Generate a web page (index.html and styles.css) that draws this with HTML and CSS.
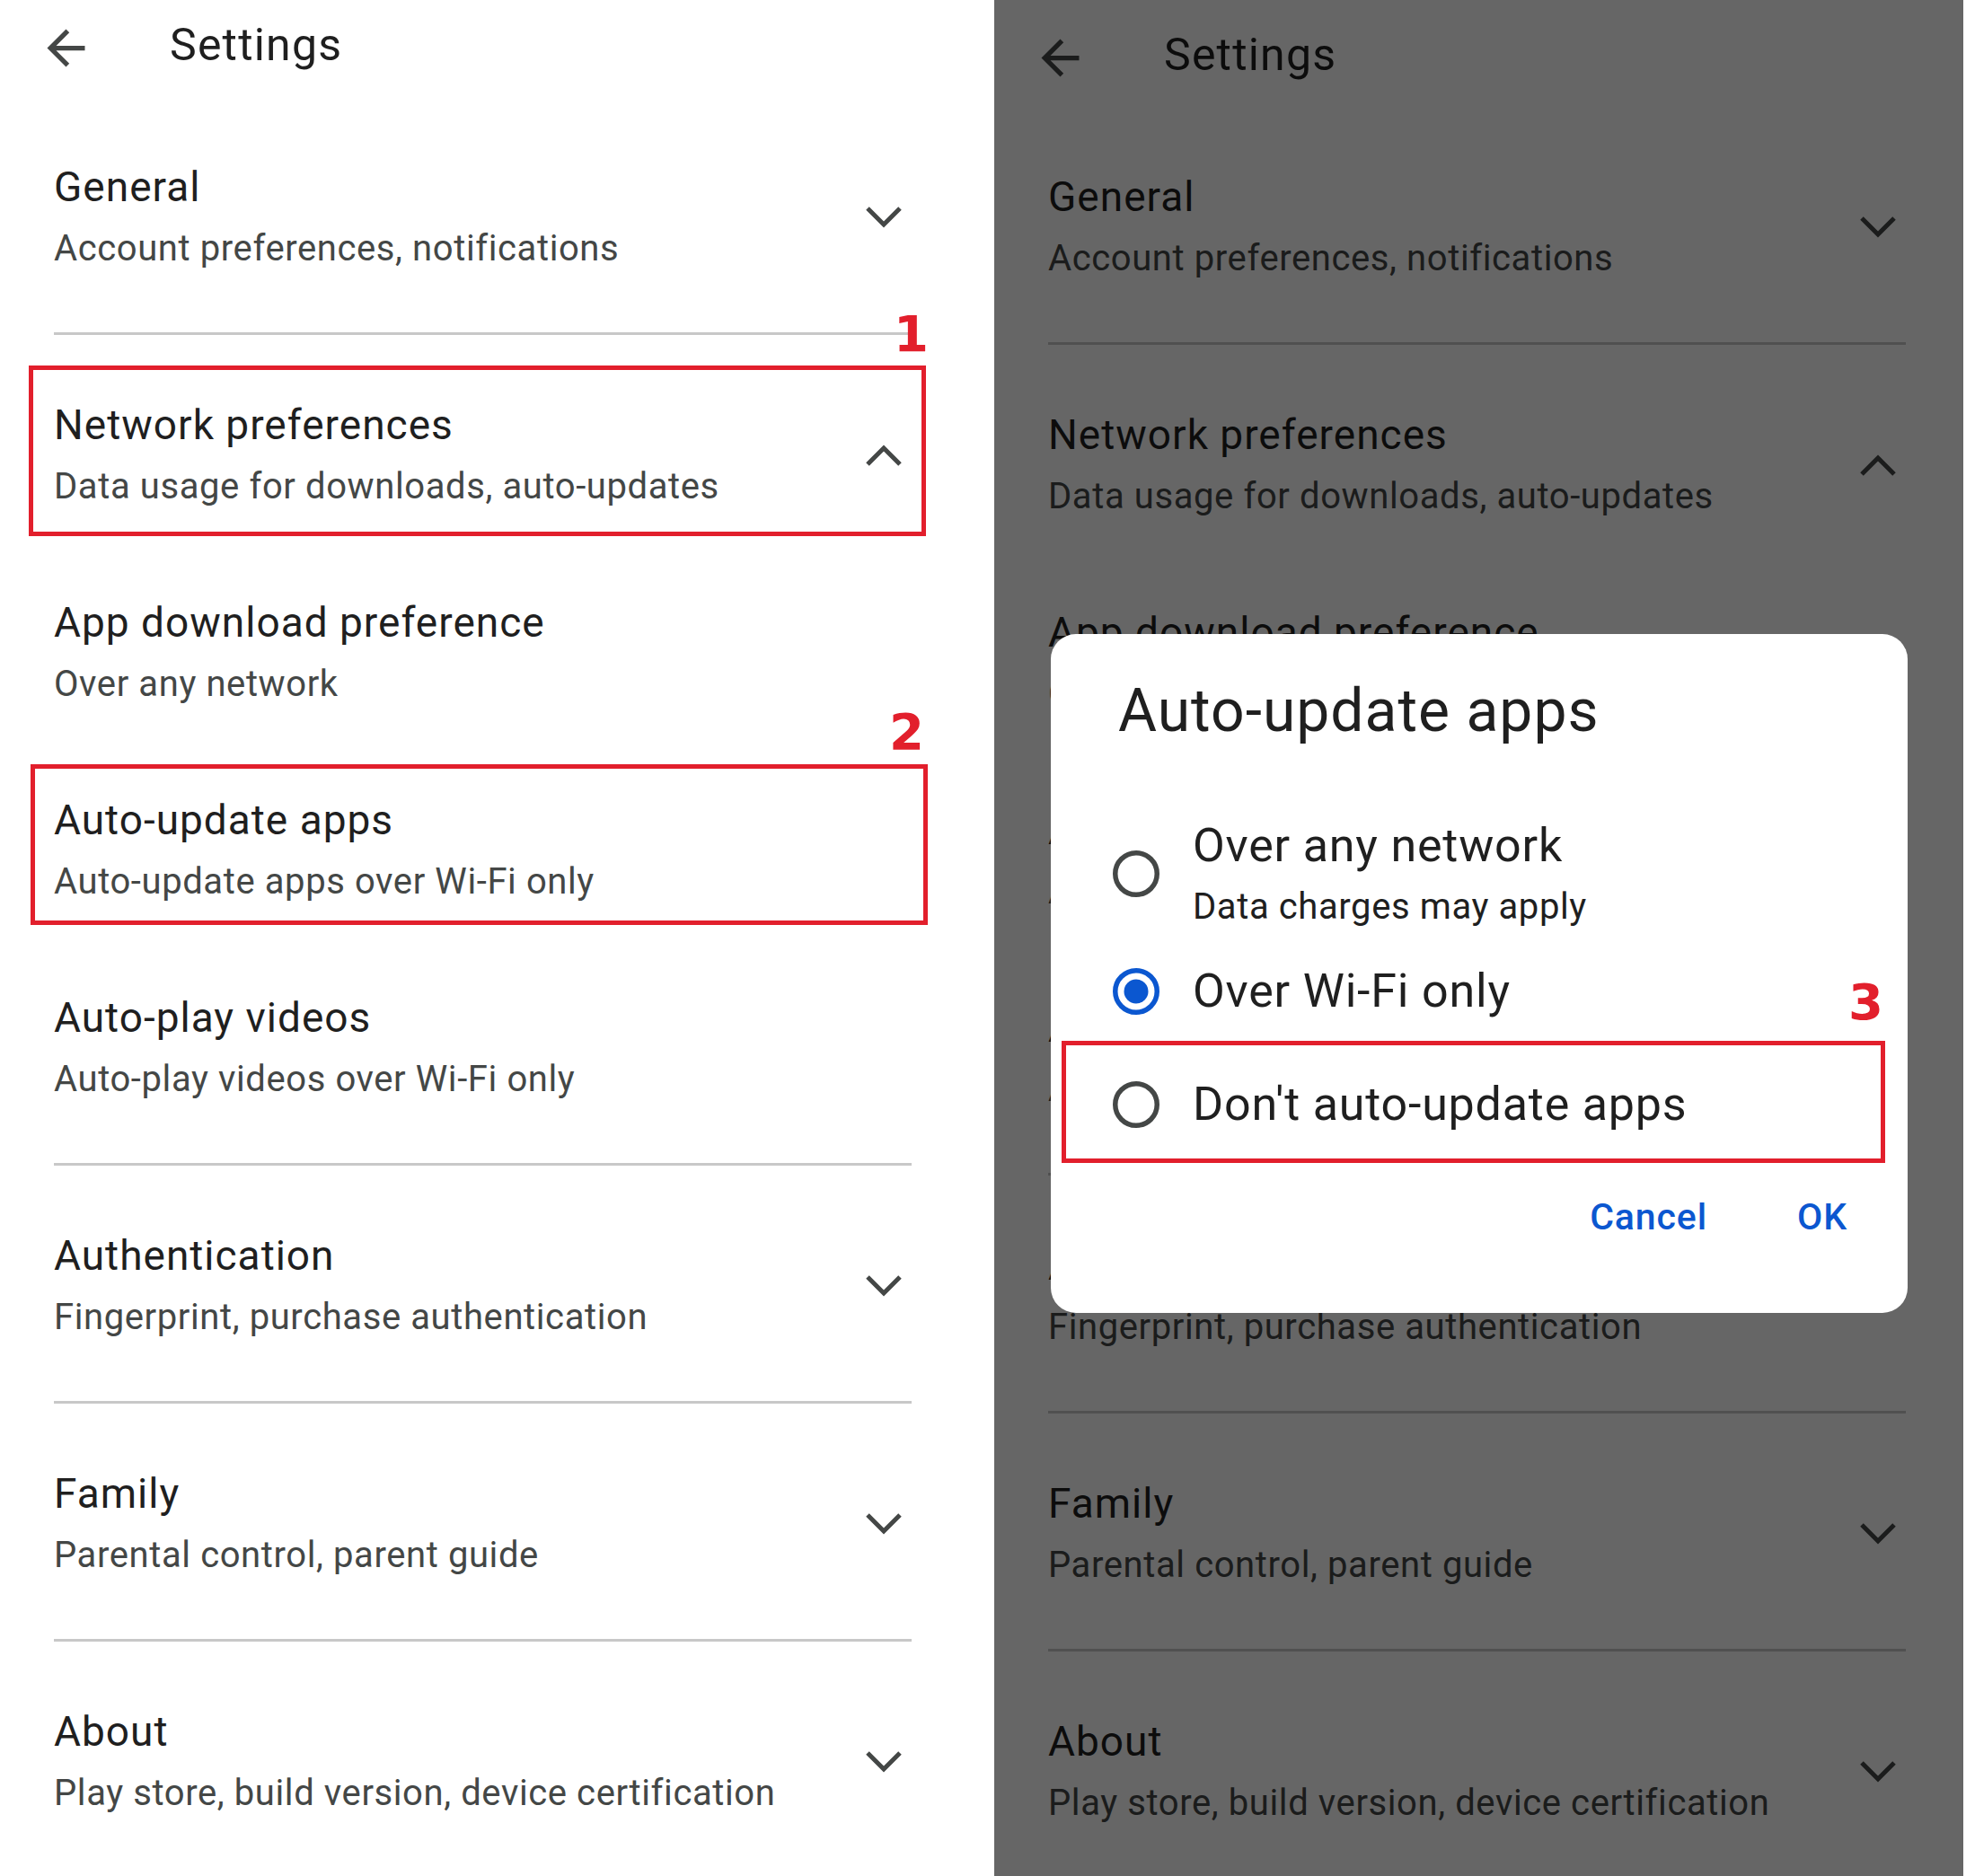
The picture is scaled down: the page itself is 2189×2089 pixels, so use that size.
FILE: index.html
```html
<!DOCTYPE html>
<html lang="en">
<head>
<meta charset="utf-8">
<title>Settings - Auto-update apps</title>
<link rel="stylesheet" href="styles.css">
</head>
<body>
<div class="page">

  <section class="screen screen-light">
    <header class="topbar">
      <svg class="back" viewBox="0 0 24 24"><path d="M20 11H7.83l5.59-5.59L12 4l-8 8 8 8 1.41-1.41L7.83 13H20v-2z"/></svg>
      <h1 class="top-title">Settings</h1>
    </header>
    <div class="list">
      <div class="group">
        <div class="row">
          <div class="text"><div class="t">General</div><div class="s">Account preferences, notifications</div></div>
          <svg class="chev" viewBox="0 0 42 28"><polyline points="3,4 21,22 39,4"/></svg>
        </div>
      </div>
      <div class="group">
        <div class="row mark">
          <div class="text"><div class="t">Network preferences</div><div class="s">Data usage for downloads, auto-updates</div></div>
          <svg class="chev" viewBox="0 0 42 28"><polyline points="3,24 21,6 39,24"/></svg>
          <div class="anno anno-1"><span class="num num-1">1</span></div>
        </div>
        <div class="sub">
          <div class="text"><div class="t">App download preference</div><div class="s">Over any network</div></div>
        </div>
        <div class="sub mark">
          <div class="text"><div class="t">Auto-update apps</div><div class="s">Auto-update apps over Wi-Fi only</div></div>
          <div class="anno anno-2"><span class="num num-2">2</span></div>
        </div>
        <div class="sub">
          <div class="text"><div class="t">Auto-play videos</div><div class="s">Auto-play videos over Wi-Fi only</div></div>
        </div>
      </div>
      <div class="group">
        <div class="row">
          <div class="text"><div class="t">Authentication</div><div class="s">Fingerprint, purchase authentication</div></div>
          <svg class="chev" viewBox="0 0 42 28"><polyline points="3,4 21,22 39,4"/></svg>
        </div>
      </div>
      <div class="group">
        <div class="row">
          <div class="text"><div class="t">Family</div><div class="s">Parental control, parent guide</div></div>
          <svg class="chev" viewBox="0 0 42 28"><polyline points="3,4 21,22 39,4"/></svg>
        </div>
      </div>
      <div class="group">
        <div class="row">
          <div class="text"><div class="t">About</div><div class="s">Play store, build version, device certification</div></div>
          <svg class="chev" viewBox="0 0 42 28"><polyline points="3,4 21,22 39,4"/></svg>
        </div>
      </div>
    </div>
  </section>

  <section class="screen screen-dim">
    <header class="topbar">
      <svg class="back" viewBox="0 0 24 24"><path d="M20 11H7.83l5.59-5.59L12 4l-8 8 8 8 1.41-1.41L7.83 13H20v-2z"/></svg>
      <h1 class="top-title">Settings</h1>
    </header>
    <div class="list">
      <div class="group">
        <div class="row">
          <div class="text"><div class="t">General</div><div class="s">Account preferences, notifications</div></div>
          <svg class="chev" viewBox="0 0 42 28"><polyline points="3,4 21,22 39,4"/></svg>
        </div>
      </div>
      <div class="group">
        <div class="row">
          <div class="text"><div class="t">Network preferences</div><div class="s">Data usage for downloads, auto-updates</div></div>
          <svg class="chev" viewBox="0 0 42 28"><polyline points="3,24 21,6 39,24"/></svg>
        </div>
        <div class="sub">
          <div class="text"><div class="t">App download preference</div><div class="s">Over any network</div></div>
        </div>
        <div class="sub">
          <div class="text"><div class="t">Auto-update apps</div><div class="s">Auto-update apps over Wi-Fi only</div></div>
        </div>
        <div class="sub">
          <div class="text"><div class="t">Auto-play videos</div><div class="s">Auto-play videos over Wi-Fi only</div></div>
        </div>
      </div>
      <div class="group">
        <div class="row">
          <div class="text"><div class="t">Authentication</div><div class="s">Fingerprint, purchase authentication</div></div>
          <svg class="chev" viewBox="0 0 42 28"><polyline points="3,4 21,22 39,4"/></svg>
        </div>
      </div>
      <div class="group">
        <div class="row">
          <div class="text"><div class="t">Family</div><div class="s">Parental control, parent guide</div></div>
          <svg class="chev" viewBox="0 0 42 28"><polyline points="3,4 21,22 39,4"/></svg>
        </div>
      </div>
      <div class="group">
        <div class="row">
          <div class="text"><div class="t">About</div><div class="s">Play store, build version, device certification</div></div>
          <svg class="chev" viewBox="0 0 42 28"><polyline points="3,4 21,22 39,4"/></svg>
        </div>
      </div>
    </div>
    <div class="scrim"></div>

    <div class="dialog">
      <h2 class="dlg-title">Auto-update apps</h2>
      <div class="opt opt-1">
        <svg class="radio" viewBox="0 0 52 52"><circle cx="26" cy="26" r="23.25"/></svg>
        <div class="opt-text"><div class="ot">Over any network</div><div class="os">Data charges may apply</div></div>
      </div>
      <div class="opt opt-2">
        <svg class="radio on" viewBox="0 0 52 52"><circle cx="26" cy="26" r="23.25"/><circle class="dot" cx="26" cy="26" r="13.5"/></svg>
        <div class="opt-text"><div class="ot">Over Wi-Fi only</div></div>
      </div>
      <div class="opt opt-3 mark">
        <svg class="radio" viewBox="0 0 52 52"><circle cx="26" cy="26" r="23.25"/></svg>
        <div class="opt-text"><div class="ot">Don't auto-update apps</div></div>
        <div class="anno anno-3"><span class="num num-3">3</span></div>
      </div>
      <div class="actions">
        <span class="btn">Cancel</span>
        <span class="btn">OK</span>
      </div>
    </div>
  </section>

</div>
</body>
</html>
```

FILE: styles.css
```css
* { box-sizing: border-box; }

html, body {
  margin: 0;
  padding: 0;
  background: #ffffff;
}

body {
  font-family: Roboto, "Noto Sans", "Liberation Sans", sans-serif;
  color: #1f1f1f;
}

.page {
  display: flex;
  width: 2189px;
  height: 2089px;
  overflow: hidden;
  background: #ffffff;
}

.screen {
  position: relative;
  height: 2089px;
  overflow: hidden;
  background: #ffffff;
  flex: none;
}

.screen-light { width: 1107px; }

.screen-dim {
  width: 1079px;
  padding-top: 11px;
}

/* Top app bar */
.topbar {
  display: flex;
  align-items: flex-start;
  height: 108px;
  padding-top: 20px;
}

.back {
  width: 63px;
  height: 63px;
  margin-left: 42px;
  margin-top: 2px;
  fill: #444746;
  flex: none;
}

.top-title {
  margin: 0 0 0 84px;
  font-size: 50px;
  line-height: 60px;
  font-weight: 400;
  letter-spacing: 1.2px;
  color: #1f1f1f;
}

/* List */
.list {
  width: 955px;
  margin-left: 60px;
}

.group {
  padding: 70px 0 65px;
  border-bottom: 3px solid #c8c8c8;
}

.group:last-child { border-bottom: none; }

.row {
  position: relative;
  display: flex;
  align-items: center;
}

.sub {
  position: relative;
  margin-top: 93px;
}

.text { flex: 1; }

.t {
  font-size: 46px;
  line-height: 60px;
  letter-spacing: 1px;
  color: #1f1f1f;
  white-space: nowrap;
}

.s {
  margin-top: 11px;
  font-size: 40px;
  line-height: 56px;
  letter-spacing: 0.6px;
  color: #444746;
  white-space: nowrap;
}

.chev {
  width: 42px;
  height: 28px;
  margin-right: 10px;
  flex: none;
  fill: none;
  stroke: #444746;
  stroke-width: 5;
}

/* Annotations */
.anno {
  position: absolute;
  border: 5px solid #e21f2c;
  pointer-events: none;
}

.anno-1 { left: -28px; right: -16px; top: -36px; bottom: -27px; }
.anno-2 { left: -26px; right: -18px; top: -32px; bottom: -20px; }
.anno-3 { left: 12px; right: 25px; top: -39px; bottom: -33px; }

.num {
  position: absolute;
  font-family: "DejaVu Sans", "Liberation Sans", sans-serif;
  font-weight: 700;
  font-size: 56px;
  line-height: 56px;
  color: #e21f2c;
}

.num-1 { top: -68px; right: -8px; }
.num-2 { top: -69px; right: -1px; }
.num-3 { top: -76px; right: -3px; }

/* Dim layer */
.scrim {
  position: absolute;
  inset: 0;
  background: rgba(0, 0, 0, 0.6);
  z-index: 1;
}

/* Dialog */
.dialog {
  position: absolute;
  left: 63px;
  top: 706px;
  width: 954px;
  height: 756px;
  background: #ffffff;
  border-radius: 28px;
  padding-top: 47px;
  z-index: 2;
  display: flex;
  flex-direction: column;
}

.dlg-title {
  margin: 0 0 0 75px;
  font-size: 66px;
  line-height: 78px;
  font-weight: 400;
  letter-spacing: 1px;
  color: #1f1f1f;
}

.opt {
  position: relative;
  display: flex;
  align-items: center;
  padding-left: 69px;
  gap: 37px;
}

.opt-1 { margin-top: 79px; }
.opt-2 { margin-top: 36px; }
.opt-3 { margin-top: 62px; }

.radio {
  width: 52px;
  height: 52px;
  flex: none;
  fill: none;
  stroke: #444746;
  stroke-width: 5.5;
}

.radio.on { stroke: #0b57d0; }
.radio .dot { fill: #0b57d0; stroke: none; }

.ot {
  font-size: 52px;
  line-height: 64px;
  letter-spacing: 0.8px;
  color: #1f1f1f;
  white-space: nowrap;
}

.os {
  margin-top: 10px;
  font-size: 40px;
  line-height: 52px;
  letter-spacing: 0.6px;
  color: #1f1f1f;
  white-space: nowrap;
}

.actions {
  display: flex;
  justify-content: flex-end;
  gap: 100px;
  margin-top: 67px;
  padding-right: 67px;
}

.btn {
  font-size: 41px;
  line-height: 52px;
  font-weight: 500;
  letter-spacing: 0.9px;
  color: #0b57d0;
}
```
